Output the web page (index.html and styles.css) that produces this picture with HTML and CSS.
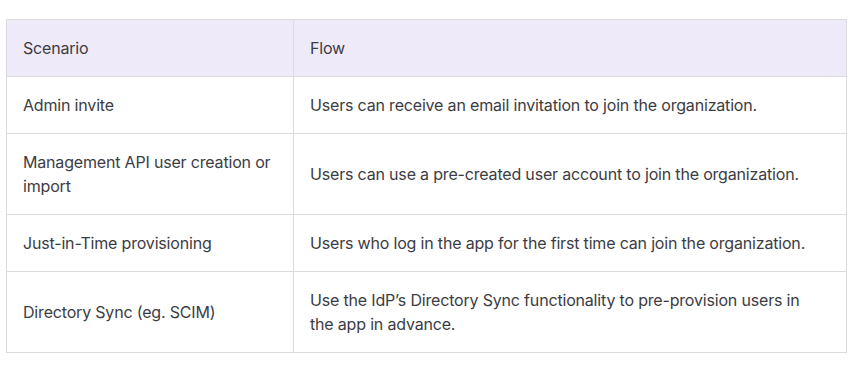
FILE: index.html
```html
<!doctype html>
<html lang="en">
  <head>
    <meta charset="UTF-8" />
    <meta name="viewport" content="width=device-width, initial-scale=1.0" />
    <title>Organization join flows</title>
    <link rel="stylesheet" href="styles.css">
  </head>
  <body>
    <main class="page-container">
      <table class="flow-table">
        <thead>
          <tr>
            <th class="col-scenario">Scenario</th>
            <th>Flow</th>
          </tr>
        </thead>
        <tbody>
          <tr>
            <td>Admin invite</td>
            <td>Users can receive an email invitation to join the organization.</td>
          </tr>
          <tr>
            <td>Management API user creation or import</td>
            <td>Users can use a pre-created user account to join the organization.</td>
          </tr>
          <tr>
            <td>Just-in-Time provisioning</td>
            <td>Users who log in the app for the first time can join the organization.</td>
          </tr>
          <tr>
            <td>Directory Sync (eg. SCIM)</td>
            <td>Use the IdP’s Directory Sync functionality to pre-provision users in the app in advance.</td>
          </tr>
        </tbody>
      </table>
    </main>
  </body>
</html>
```

FILE: styles.css
```css
* {
  margin: 0;
  padding: 0;
  box-sizing: border-box;
}

body {
  font-family: "Inter", "Noto Sans", sans-serif;
  background: #ffffff;
  color: #3c3c43;
}

.page-container {
  padding: 19px 10px 0 6px;
}

.flow-table {
  width: 841px;
  border-collapse: collapse;
  table-layout: fixed;
  font-size: 16px;
  letter-spacing: -0.18px;
  line-height: 24px;
}

.flow-table th,
.flow-table td {
  border: 1px solid #dcdce0;
  padding: 16px 22px 16px 16px;
  text-align: left;
  vertical-align: middle;
}

.flow-table th {
  font-weight: 400;
  background: #eeeaf9;
  color: #3c3c43;
}

.col-scenario {
  width: 287px;
}
```
